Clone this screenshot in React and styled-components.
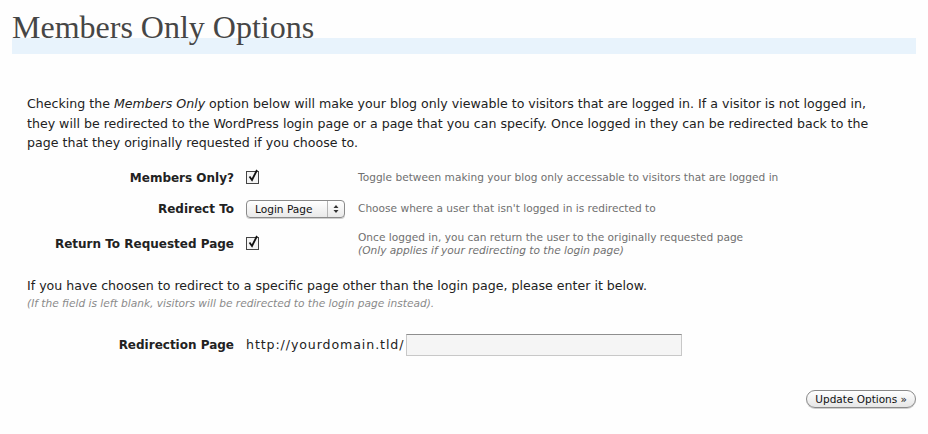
import styled, { createGlobalStyle } from "styled-components";

const GlobalStyle = createGlobalStyle`
  body {
    margin: 0;
    background: #fefefe;
    color: #222;
    font-family: "DejaVu Sans", Verdana, sans-serif;
  }
`;

const Page = styled.div`
  padding: 12px 8px 20px 12px;
`;

const Title = styled.h2`
  margin: 0 4px 0 0;
  font-family: "Liberation Serif", "Times New Roman", serif;
  font-weight: normal;
  font-size: 32px;
  line-height: 26px;
  color: #464646;
  padding-top: 2px;
  border-bottom: 16px solid #e8f3fc;
  height: 24px;
`;

const Body = styled.div`
  padding: 40px 0 0 15px;
`;

const Intro = styled.p`
  margin: 0;
  max-width: 855px;
  font-size: 12.6px;
  line-height: 19.5px;
  color: #222;
`;

const Form = styled.div`
  display: grid;
  grid-template-columns: 222px 100px 1fr;
  column-gap: 12px;
  row-gap: 13px;
  align-items: center;
  margin-top: 16px;
  margin-left: -15px;
`;

const Label = styled.div`
  text-align: right;
  font-weight: bold;
  font-size: 12px;
  color: #222;
  grid-column: 1;
`;

const Control = styled.div`
  display: flex;
  align-items: center;
  height: 18px;
`;

const Desc = styled.div`
  font-size: 10.6px;
  line-height: 13px;
  color: #707070;
  em {
    font-style: italic;
  }
`;

const Check = styled.span`
  display: inline-block;
  width: 11px;
  height: 11px;
  border: 1px solid #444;
  background: #f4f4f4;
  position: relative;
  svg {
    position: absolute;
    left: 0;
    top: -3px;
  }
`;

const Select = styled.div`
  width: 97px;
  height: 16px;
  border: 1px solid #8a8a8a;
  border-radius: 4px;
  background: linear-gradient(#ffffff, #e9e9e9);
  display: flex;
  align-items: center;
  font-size: 10.6px;
  color: #111;
  box-shadow: 0 1px 0 #cfcfcf;
`;

const SelectText = styled.span`
  flex: 1;
  padding-left: 8px;
`;

const Arrows = styled.span`
  width: 16px;
  height: 100%;
  border-left: 1px solid #b5b5b5;
  display: flex;
  align-items: center;
  justify-content: center;
`;

const Note = styled.p`
  margin: 19px 0 0 0;
  font-size: 12.6px;
  line-height: 19px;
  color: #222;
`;

const Small = styled.div`
  font-size: 10.6px;
  line-height: 16px;
  font-style: italic;
  color: #8a8a8a;
`;

const RedirectRow = styled(Form)`
  margin-top: 23px;
  grid-template-columns: 222px auto 1fr;
`;

const UrlWrap = styled.div`
  display: flex;
  align-items: center;
  grid-column: 2 / span 2;
  font-size: 12.6px;
  letter-spacing: 0.9px;
  color: #222;
`;

const TextInput = styled.input`
  margin-left: 2px;
  width: 274px;
  height: 20px;
  border: 1px solid #c8c8c8;
  border-top-color: #8e8e8e;
  background: #f5f5f5;
  padding: 0;
`;

const Actions = styled.div`
  display: flex;
  justify-content: flex-end;
  margin-top: 34px;
  margin-right: 4px;
`;

const Button = styled.button`
  font-family: "DejaVu Sans", Verdana, sans-serif;
  font-size: 10.5px;
  color: #111;
  height: 18px;
  padding: 0 8px;
  border: 1px solid #8a8a8a;
  border-radius: 9px;
  background: linear-gradient(#ffffff, #e6e6e6);
  box-shadow: 0 1px 0 #cfcfcf;
`;

const CheckBox = () => (
  <Check>
    <svg width="12" height="13" viewBox="0 0 12 13">
      <path d="M2.5 7.5 L5 11 L10 1" fill="none" stroke="#111" strokeWidth="1.8" />
    </svg>
  </Check>
);

export default function App() {
  return (
    <>
      <GlobalStyle />
      <Page>
        <Title>Members Only Options</Title>
        <Body>
          <Intro>
            Checking the <em>Members Only</em> option below will make your blog only viewable to visitors that are logged in. If a visitor is not logged in, they will be redirected to the WordPress login page or a page that you can specify. Once logged in they can be redirected back to the page that they originally requested if you choose to.
          </Intro>
          <Form>
            <Label>Members Only?</Label>
            <Control>
              <CheckBox />
            </Control>
            <Desc>Toggle between making your blog only accessable to visitors that are logged in</Desc>

            <Label>Redirect To</Label>
            <Control>
              <Select>
                <SelectText>Login Page</SelectText>
                <Arrows>
                  <svg width="6" height="10" viewBox="0 0 6 10">
                    <path d="M0.5 4 L3 1 L5.5 4 Z M0.5 6 L3 9 L5.5 6 Z" fill="#333" />
                  </svg>
                </Arrows>
              </Select>
            </Control>
            <Desc>Choose where a user that isn't logged in is redirected to</Desc>

            <Label>Return To Requested Page</Label>
            <Control>
              <CheckBox />
            </Control>
            <Desc>
              Once logged in, you can return the user to the originally requested page
              <br />
              <em>(Only applies if your redirecting to the login page)</em>
            </Desc>
          </Form>
          <Note>If you have choosen to redirect to a specific page other than the login page, please enter it below.</Note>
          <Small>(If the field is left blank, visitors will be redirected to the login page instead).</Small>
          <RedirectRow>
            <Label>Redirection Page</Label>
            <UrlWrap>
              http://yourdomain.tld/
              <TextInput type="text" />
            </UrlWrap>
          </RedirectRow>
          <Actions>
            <Button>Update Options »</Button>
          </Actions>
        </Body>
      </Page>
    </>
  );
}
